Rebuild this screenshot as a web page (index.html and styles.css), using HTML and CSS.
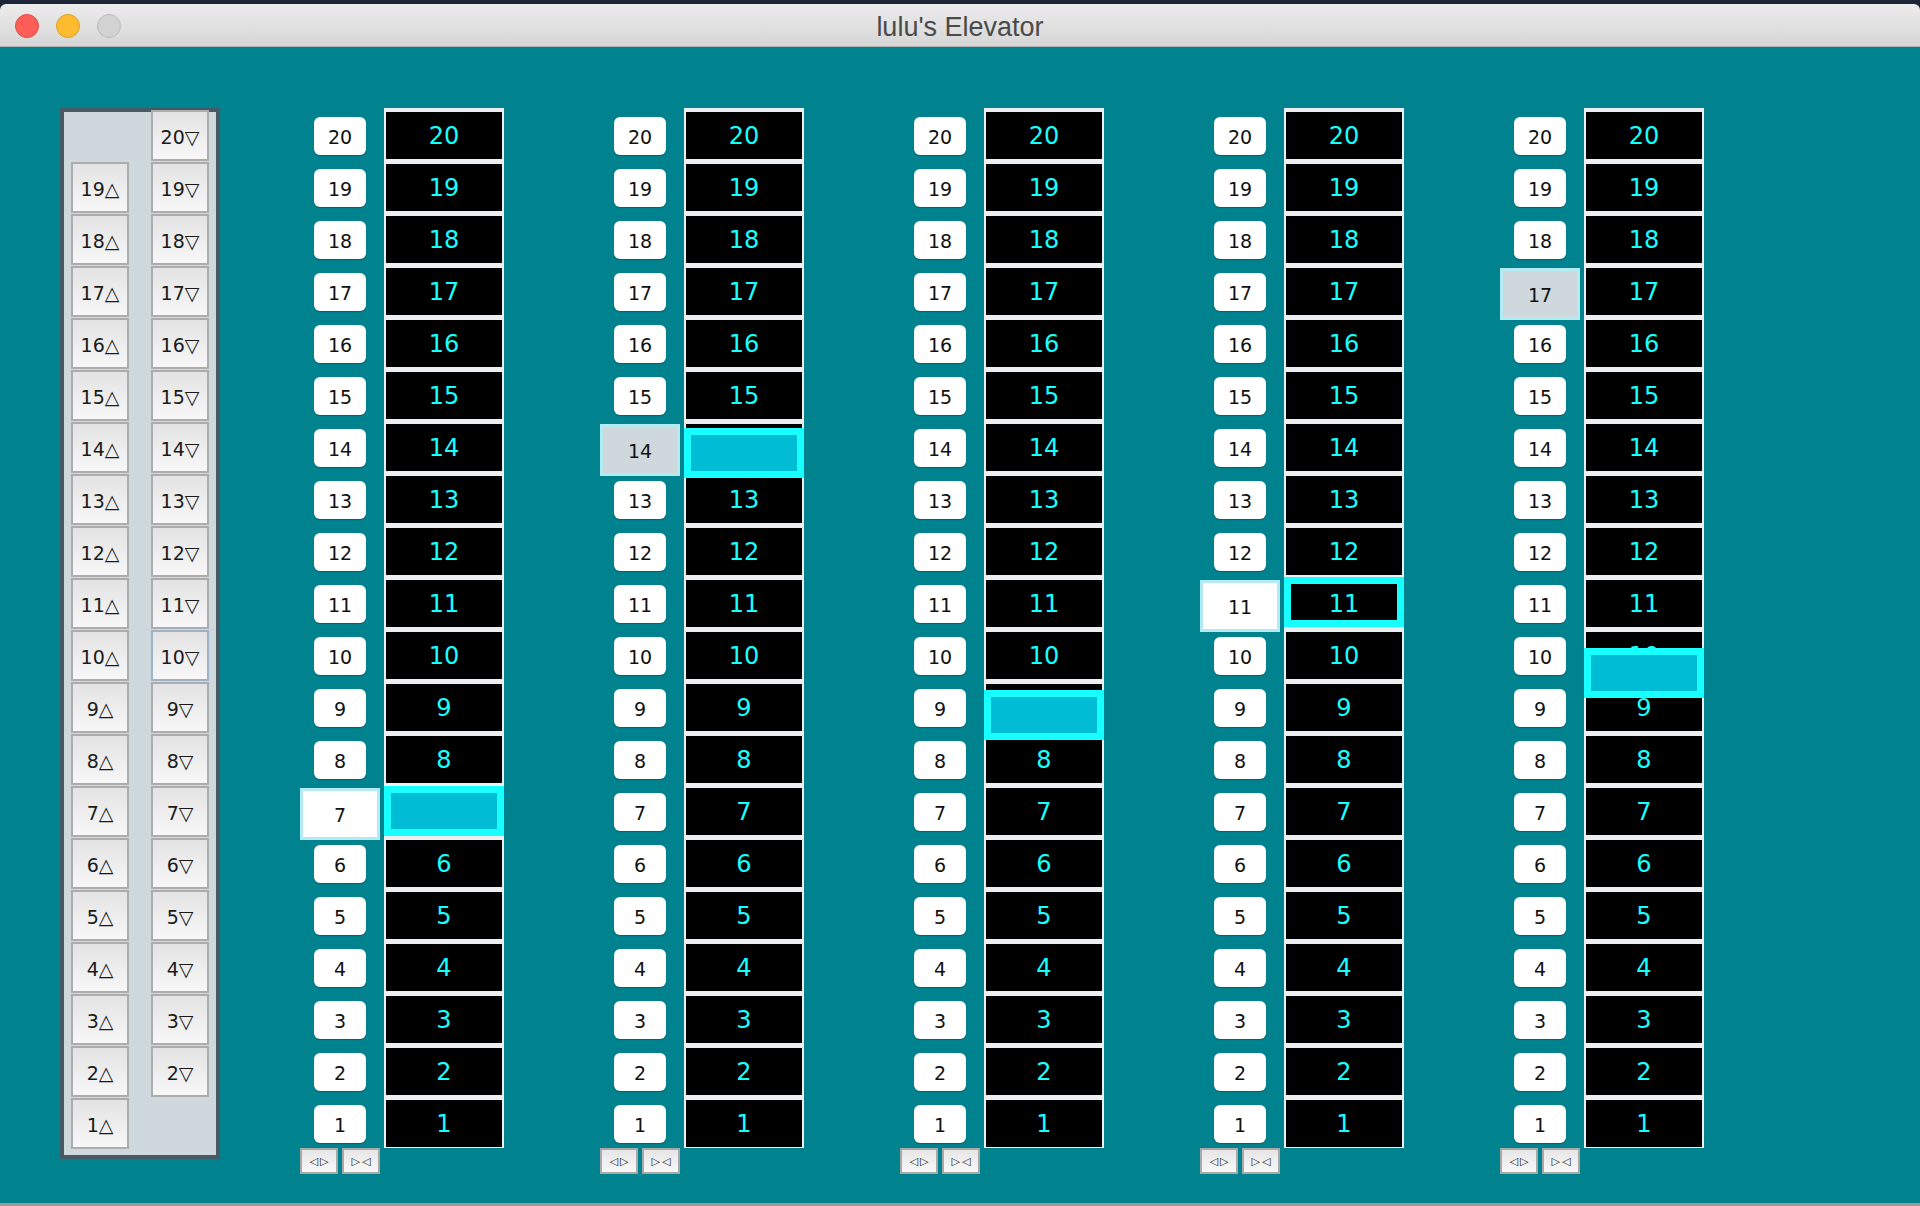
FILE: index.html
```html
<!DOCTYPE html>
<html>
<head>
<meta charset="utf-8">
<title>lulu's Elevator</title>
<link rel="stylesheet" href="styles.css">
</head>
<body>
<div class="desk"></div>
<div class="window">
  <div class="titlebar">
    <div class="lights">
      <span class="light red"></span>
      <span class="light yellow"></span>
      <span class="light gray"></span>
    </div>
    <div class="title">lulu's Elevator</div>
  </div>
  <div class="content">
    <div class="panel">
      <div class="pcol up">
        <div class="pbtn">19△</div><div class="pbtn">18△</div><div class="pbtn">17△</div><div class="pbtn">16△</div><div class="pbtn">15△</div>
        <div class="pbtn">14△</div><div class="pbtn">13△</div><div class="pbtn">12△</div><div class="pbtn">11△</div><div class="pbtn">10△</div>
        <div class="pbtn">9△</div><div class="pbtn">8△</div><div class="pbtn">7△</div><div class="pbtn">6△</div><div class="pbtn">5△</div>
        <div class="pbtn">4△</div><div class="pbtn">3△</div><div class="pbtn">2△</div><div class="pbtn">1△</div>
      </div>
      <div class="pcol down">
        <div class="pbtn">20▽</div><div class="pbtn">19▽</div><div class="pbtn">18▽</div><div class="pbtn">17▽</div><div class="pbtn">16▽</div>
        <div class="pbtn">15▽</div><div class="pbtn">14▽</div><div class="pbtn">13▽</div><div class="pbtn">12▽</div><div class="pbtn">11▽</div>
        <div class="pbtn focus">10▽</div><div class="pbtn">9▽</div><div class="pbtn">8▽</div><div class="pbtn">7▽</div><div class="pbtn">6▽</div>
        <div class="pbtn">5▽</div><div class="pbtn">4▽</div><div class="pbtn">3▽</div><div class="pbtn">2▽</div>
      </div>
    </div>

    <div class="shafts">
      <!-- shaft 1 -->
      <div class="shaft">
        <div class="lcol">
          <div class="lrow"><span class="lbl">20</span></div><div class="lrow"><span class="lbl">19</span></div><div class="lrow"><span class="lbl">18</span></div><div class="lrow"><span class="lbl">17</span></div><div class="lrow"><span class="lbl">16</span></div>
          <div class="lrow"><span class="lbl">15</span></div><div class="lrow"><span class="lbl">14</span></div><div class="lrow"><span class="lbl">13</span></div><div class="lrow"><span class="lbl">12</span></div><div class="lrow"><span class="lbl">11</span></div>
          <div class="lrow"><span class="lbl">10</span></div><div class="lrow"><span class="lbl">9</span></div><div class="lrow"><span class="lbl">8</span></div><div class="lrow"><span class="lbl sel">7</span></div><div class="lrow"><span class="lbl">6</span></div>
          <div class="lrow"><span class="lbl">5</span></div><div class="lrow"><span class="lbl">4</span></div><div class="lrow"><span class="lbl">3</span></div><div class="lrow"><span class="lbl">2</span></div><div class="lrow"><span class="lbl">1</span></div>
          <div class="ctrls"><span class="cbtn">◁▷</span><span class="cbtn">▷◁</span></div>
        </div>
        <div class="dcol">
          <div class="cell">20</div><div class="cell">19</div><div class="cell">18</div><div class="cell">17</div><div class="cell">16</div>
          <div class="cell">15</div><div class="cell">14</div><div class="cell">13</div><div class="cell">12</div><div class="cell">11</div>
          <div class="cell">10</div><div class="cell">9</div><div class="cell">8</div><div class="cell">7</div><div class="cell">6</div>
          <div class="cell">5</div><div class="cell">4</div><div class="cell">3</div><div class="cell">2</div><div class="cell">1</div>
          <div class="car" style="top:678px"></div>
        </div>
      </div>
      <!-- shaft 2 -->
      <div class="shaft">
        <div class="lcol">
          <div class="lrow"><span class="lbl">20</span></div><div class="lrow"><span class="lbl">19</span></div><div class="lrow"><span class="lbl">18</span></div><div class="lrow"><span class="lbl">17</span></div><div class="lrow"><span class="lbl">16</span></div>
          <div class="lrow"><span class="lbl">15</span></div><div class="lrow"><span class="lbl sel grey">14</span></div><div class="lrow"><span class="lbl">13</span></div><div class="lrow"><span class="lbl">12</span></div><div class="lrow"><span class="lbl">11</span></div>
          <div class="lrow"><span class="lbl">10</span></div><div class="lrow"><span class="lbl">9</span></div><div class="lrow"><span class="lbl">8</span></div><div class="lrow"><span class="lbl">7</span></div><div class="lrow"><span class="lbl">6</span></div>
          <div class="lrow"><span class="lbl">5</span></div><div class="lrow"><span class="lbl">4</span></div><div class="lrow"><span class="lbl">3</span></div><div class="lrow"><span class="lbl">2</span></div><div class="lrow"><span class="lbl">1</span></div>
          <div class="ctrls"><span class="cbtn">◁▷</span><span class="cbtn">▷◁</span></div>
        </div>
        <div class="dcol">
          <div class="cell">20</div><div class="cell">19</div><div class="cell">18</div><div class="cell">17</div><div class="cell">16</div>
          <div class="cell">15</div><div class="cell">14</div><div class="cell">13</div><div class="cell">12</div><div class="cell">11</div>
          <div class="cell">10</div><div class="cell">9</div><div class="cell">8</div><div class="cell">7</div><div class="cell">6</div>
          <div class="cell">5</div><div class="cell">4</div><div class="cell">3</div><div class="cell">2</div><div class="cell">1</div>
          <div class="car" style="top:320px"></div>
        </div>
      </div>
      <!-- shaft 3 -->
      <div class="shaft">
        <div class="lcol">
          <div class="lrow"><span class="lbl">20</span></div><div class="lrow"><span class="lbl">19</span></div><div class="lrow"><span class="lbl">18</span></div><div class="lrow"><span class="lbl">17</span></div><div class="lrow"><span class="lbl">16</span></div>
          <div class="lrow"><span class="lbl">15</span></div><div class="lrow"><span class="lbl">14</span></div><div class="lrow"><span class="lbl">13</span></div><div class="lrow"><span class="lbl">12</span></div><div class="lrow"><span class="lbl">11</span></div>
          <div class="lrow"><span class="lbl">10</span></div><div class="lrow"><span class="lbl">9</span></div><div class="lrow"><span class="lbl">8</span></div><div class="lrow"><span class="lbl">7</span></div><div class="lrow"><span class="lbl">6</span></div>
          <div class="lrow"><span class="lbl">5</span></div><div class="lrow"><span class="lbl">4</span></div><div class="lrow"><span class="lbl">3</span></div><div class="lrow"><span class="lbl">2</span></div><div class="lrow"><span class="lbl">1</span></div>
          <div class="ctrls"><span class="cbtn">◁▷</span><span class="cbtn">▷◁</span></div>
        </div>
        <div class="dcol">
          <div class="cell">20</div><div class="cell">19</div><div class="cell">18</div><div class="cell">17</div><div class="cell">16</div>
          <div class="cell">15</div><div class="cell">14</div><div class="cell">13</div><div class="cell">12</div><div class="cell">11</div>
          <div class="cell">10</div><div class="cell">9</div><div class="cell">8</div><div class="cell">7</div><div class="cell">6</div>
          <div class="cell">5</div><div class="cell">4</div><div class="cell">3</div><div class="cell">2</div><div class="cell">1</div>
          <div class="car" style="top:582px"></div>
        </div>
      </div>
      <!-- shaft 4 -->
      <div class="shaft">
        <div class="lcol">
          <div class="lrow"><span class="lbl">20</span></div><div class="lrow"><span class="lbl">19</span></div><div class="lrow"><span class="lbl">18</span></div><div class="lrow"><span class="lbl">17</span></div><div class="lrow"><span class="lbl">16</span></div>
          <div class="lrow"><span class="lbl">15</span></div><div class="lrow"><span class="lbl">14</span></div><div class="lrow"><span class="lbl">13</span></div><div class="lrow"><span class="lbl">12</span></div><div class="lrow"><span class="lbl sel">11</span></div>
          <div class="lrow"><span class="lbl">10</span></div><div class="lrow"><span class="lbl">9</span></div><div class="lrow"><span class="lbl">8</span></div><div class="lrow"><span class="lbl">7</span></div><div class="lrow"><span class="lbl">6</span></div>
          <div class="lrow"><span class="lbl">5</span></div><div class="lrow"><span class="lbl">4</span></div><div class="lrow"><span class="lbl">3</span></div><div class="lrow"><span class="lbl">2</span></div><div class="lrow"><span class="lbl">1</span></div>
          <div class="ctrls"><span class="cbtn">◁▷</span><span class="cbtn">▷◁</span></div>
        </div>
        <div class="dcol">
          <div class="cell">20</div><div class="cell">19</div><div class="cell">18</div><div class="cell">17</div><div class="cell">16</div>
          <div class="cell">15</div><div class="cell">14</div><div class="cell">13</div><div class="cell">12</div><div class="cell">11</div>
          <div class="cell">10</div><div class="cell">9</div><div class="cell">8</div><div class="cell">7</div><div class="cell">6</div>
          <div class="cell">5</div><div class="cell">4</div><div class="cell">3</div><div class="cell">2</div><div class="cell">1</div>
          <div class="car open" style="top:469px"></div>
        </div>
      </div>
      <!-- shaft 5 -->
      <div class="shaft">
        <div class="lcol">
          <div class="lrow"><span class="lbl">20</span></div><div class="lrow"><span class="lbl">19</span></div><div class="lrow"><span class="lbl">18</span></div><div class="lrow"><span class="lbl sel grey">17</span></div><div class="lrow"><span class="lbl">16</span></div>
          <div class="lrow"><span class="lbl">15</span></div><div class="lrow"><span class="lbl">14</span></div><div class="lrow"><span class="lbl">13</span></div><div class="lrow"><span class="lbl">12</span></div><div class="lrow"><span class="lbl">11</span></div>
          <div class="lrow"><span class="lbl">10</span></div><div class="lrow"><span class="lbl">9</span></div><div class="lrow"><span class="lbl">8</span></div><div class="lrow"><span class="lbl">7</span></div><div class="lrow"><span class="lbl">6</span></div>
          <div class="lrow"><span class="lbl">5</span></div><div class="lrow"><span class="lbl">4</span></div><div class="lrow"><span class="lbl">3</span></div><div class="lrow"><span class="lbl">2</span></div><div class="lrow"><span class="lbl">1</span></div>
          <div class="ctrls"><span class="cbtn">◁▷</span><span class="cbtn">▷◁</span></div>
        </div>
        <div class="dcol">
          <div class="cell">20</div><div class="cell">19</div><div class="cell">18</div><div class="cell">17</div><div class="cell">16</div>
          <div class="cell">15</div><div class="cell">14</div><div class="cell">13</div><div class="cell">12</div><div class="cell">11</div>
          <div class="cell">10</div><div class="cell">9</div><div class="cell">8</div><div class="cell">7</div><div class="cell">6</div>
          <div class="cell">5</div><div class="cell">4</div><div class="cell">3</div><div class="cell">2</div><div class="cell">1</div>
          <div class="car" style="top:540px"></div>
        </div>
      </div>
    </div>
  </div>
  <div class="bottomedge"></div>
</div>
</body>
</html>
```

FILE: styles.css
```css
* { box-sizing: border-box; }
html, body {
  margin: 0;
  padding: 0;
  width: 1920px;
  height: 1206px;
  overflow: hidden;
  background: #1c2637;
  font-family: "DejaVu Sans", "Liberation Sans", sans-serif;
}
.desk {
  height: 4px;
  background: #1c2637;
}
.window {
  display: flex;
  flex-direction: column;
  height: 1202px;
}
.titlebar {
  position: relative;
  height: 43px;
  background: linear-gradient(#ececec, #d6d6d6);
  border-bottom: 1px solid #b4b4b4;
  border-radius: 6px 6px 0 0;
  display: flex;
  align-items: center;
  justify-content: center;
}
.lights {
  position: absolute;
  left: 15px;
  top: 10px;
  display: flex;
  gap: 17px;
}
.light {
  width: 24px;
  height: 24px;
  border-radius: 50%;
  display: block;
}
.light.red { background: #fc5f57; border: 1px solid #df4a43; }
.light.yellow { background: #fdbc2f; border: 1px solid #de9f28; }
.light.gray { background: #d2d2d2; border: 1px solid #bcbcbc; }
.title {
  font-family: "Liberation Sans", "Helvetica", sans-serif;
  font-size: 27px;
  color: #4a4a4a;
  margin-top: 4px;
}
.content {
  height: 1156px;
  background: #00838f;
  display: flex;
  align-items: flex-start;
  padding: 61px 0 0 60px;
}
.bottomedge {
  height: 3px;
  background: #9a9a9a;
}

/* left call panel */
.panel {
  width: 160px;
  border: 4px solid #455a64;
  background: #cfd8dc;
  padding: 0 7px 5px 7px;
  display: flex;
  gap: 22px;
  align-items: flex-start;
}
.pcol {
  width: 58px;
  display: flex;
  flex-direction: column;
}
.pcol.up { margin-top: 50px; }
.pcol.down { margin-top: -2px; }
.pbtn {
  height: 51px;
  margin-bottom: 1px;
  border: 2px solid #adadad;
  background: linear-gradient(#e3e3e3, #f7f7f7);
  display: flex;
  align-items: center;
  justify-content: center;
  padding-top: 2px;
  font-size: 19px;
  color: #1a1a1a;
}
.pbtn.focus { border-color: #9cb2c8; }

/* shafts */
.shafts {
  display: flex;
  gap: 96px;
  margin-left: 80px;
}
.shaft {
  display: flex;
  gap: 4px;
  align-items: flex-start;
}
.lcol {
  width: 80px;
  padding-top: 4px;
  display: flex;
  flex-direction: column;
}
.lrow {
  height: 52px;
  display: flex;
  justify-content: center;
  align-items: flex-start;
}
.lbl {
  width: 52px;
  height: 38px;
  margin-top: 5px;
  background: #ffffff;
  border-radius: 6px;
  box-shadow: 0 1px 1px rgba(0, 0, 0, 0.25);
  display: flex;
  align-items: center;
  justify-content: center;
  padding-top: 1px;
  font-size: 19px;
  color: #111;
}
.lbl.sel {
  width: 80px;
  height: 52px;
  margin-top: 0;
  border: 3px solid #b2ebf2;
  border-radius: 0;
  box-shadow: none;
}
.lbl.grey { background: #cfd8dc; }
.ctrls {
  display: flex;
  gap: 4px;
  margin-top: -4px;
}
.cbtn {
  width: 38px;
  height: 26px;
  border: 2px solid #a9a9a9;
  background: linear-gradient(#e6e6e6, #f8f8f8);
  display: flex;
  align-items: center;
  justify-content: center;
  font-size: 11px;
  color: #111;
  letter-spacing: 2px;
  padding-left: 2px;
}
.dcol {
  position: relative;
  width: 120px;
  display: flex;
  flex-direction: column;
}
.cell {
  height: 52px;
  background: #000;
  border-style: solid;
  border-color: #eceff1;
  border-width: 4px 2px 1px 2px;
  display: flex;
  align-items: center;
  justify-content: center;
  font-size: 24px;
  color: #18ffff;
}
.car {
  position: absolute;
  left: 0;
  width: 120px;
  height: 50px;
  border: 7px solid #18ffff;
  background: #00bcd4;
}
.car.open { background: transparent; }
```
